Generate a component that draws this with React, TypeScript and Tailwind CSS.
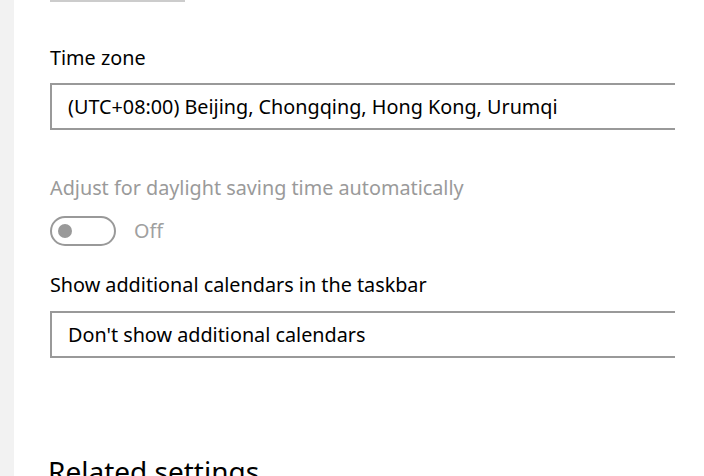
import React from "react";

export default function App() {
  return (
    <div
      className="flex h-[476px] w-[704px] overflow-hidden bg-white"
      style={{ fontFamily: '"Noto Sans", "Open Sans", sans-serif' }}
    >
      <div className="w-[14px] shrink-0 bg-[#f2f2f2]" />
      <div className="flex w-[661px] shrink-0 flex-col overflow-hidden pl-[36px]">
        <div className="h-[2px] w-[135px] shrink-0 bg-[#cccccc]" />
        <div className="mt-[44px] shrink-0 text-[19.8px] leading-[24px] text-black">Time zone</div>
        <div className="mt-[13px] flex h-[47px] w-[700px] shrink-0 items-center border-2 border-[#999999] pl-[16px] text-[19.8px] text-black">
          (UTC+08:00) Beijing, Chongqing, Hong Kong, Urumqi
        </div>
        <div className="mt-[46px] shrink-0 text-[19.8px] leading-[24px] text-[#9a9a9a]">
          Adjust for daylight saving time automatically
        </div>
        <div className="mt-[16px] flex h-[30px] shrink-0 items-center">
          <div className="flex h-[30px] w-[66px] shrink-0 items-center rounded-full border-2 border-[#999999] pl-[6px]">
            <div className="h-[14px] w-[14px] shrink-0 rounded-full bg-[#999999]" />
          </div>
          <span className="ml-[18px] text-[19.8px] leading-[24px] text-[#a0a0a0]">Off</span>
        </div>
        <div className="mt-[27px] shrink-0 text-[19.8px] leading-[24px] text-black">
          Show additional calendars in the taskbar
        </div>
        <div className="mt-[14px] flex h-[47px] w-[700px] shrink-0 items-center border-2 border-[#999999] pl-[16px] text-[19.8px] text-black">
          Don't show additional calendars
        </div>
        <div className="mt-[96px] -ml-[2px] shrink-0 text-[28px] leading-[34px] text-black">Related settings</div>
      </div>
    </div>
  );
}
